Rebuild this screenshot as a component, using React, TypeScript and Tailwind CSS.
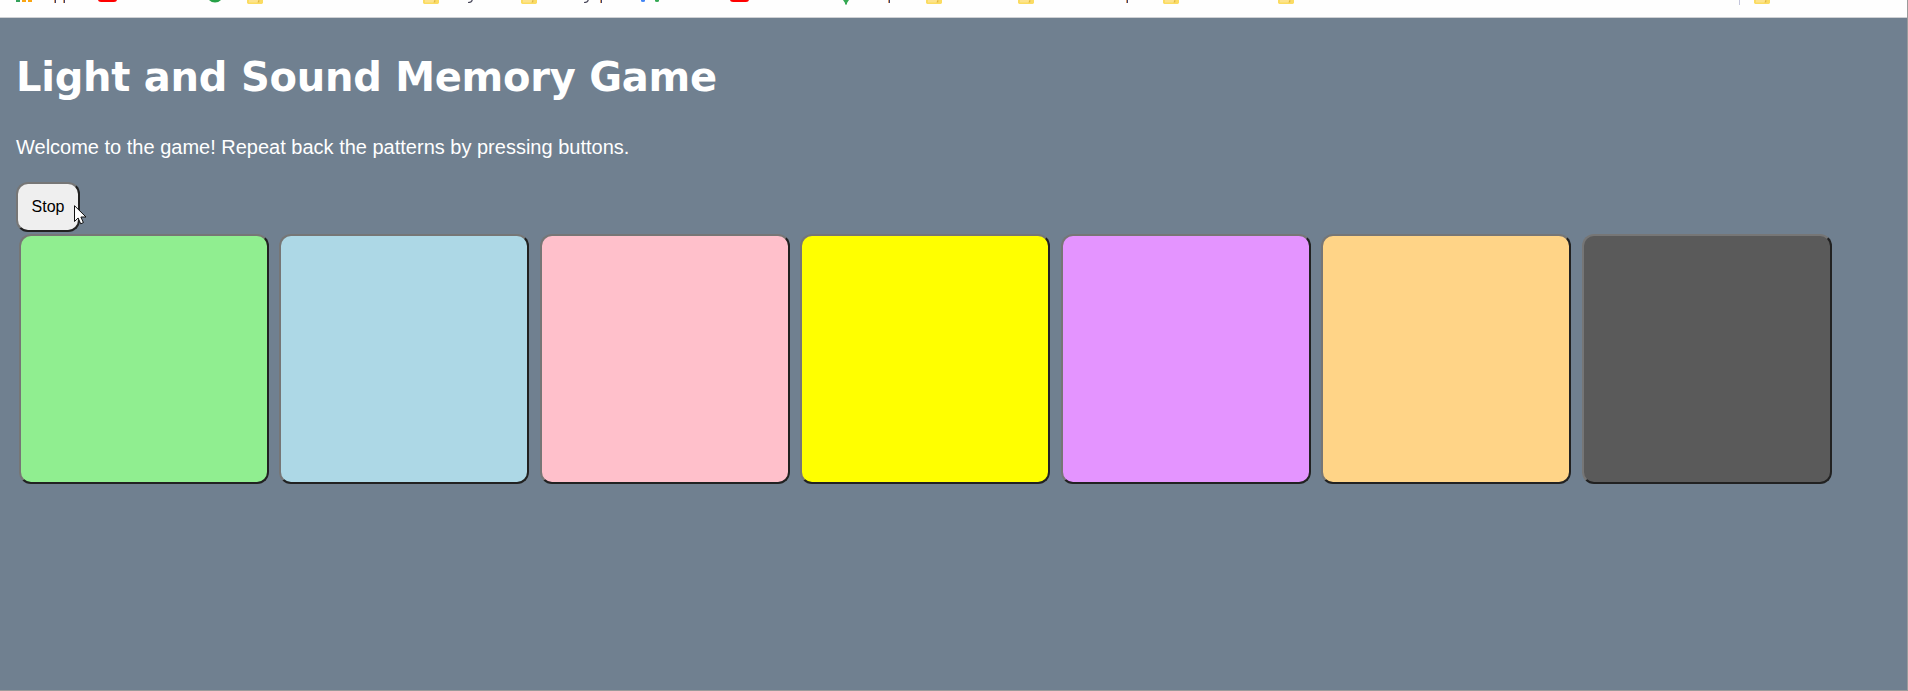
import type { ReactNode } from "react";

function Folder() {
  return (
    <>
      <path d="M0 0H16V2.6Q16 4 14.6 4H1.4Q0 4 0 2.6Z" fill="#fbdc62" />
      <rect x="2" y="0" width="11" height="2.5" fill="#fde38c" />
      <path d="M11.5 0H12.5V2.5H10.5Z" fill="#e3b93c" />
    </>
  );
}

function YouTube() {
  return <path d="M0 0H19Q18.7 2 16 2H3Q.3 2 0 0Z" fill="#ff0000" />;
}

function Stem({ x }: { x: number }) {
  return (
    <>
      <rect x={x - 1} width="1" height="3" fill="#d99a63" />
      <rect x={x} width="1" height="3" fill="#3c4272" />
    </>
  );
}

function Tail({ x }: { x: number }) {
  return <path d={`M${x + 4.3} 0Q${x + 3.5} 2.4 ${x} 2.5`} fill="none" stroke="#4b4a5c" strokeWidth="1.2" />;
}

function Bookmark({ className, children }: { className: string; children: ReactNode }) {
  return (
    <svg className={`h-[6px] shrink-0 overflow-visible ${className}`} aria-hidden="true">
      {children}
    </svg>
  );
}

function BookmarksBar() {
  return (
    <div className="flex h-[18px] items-start overflow-hidden border-b border-[#cfd1d4] bg-[#fefefe] pl-4">
      <Bookmark className="w-[82px]">
        <rect width="4" height="2" fill="#34a15a" />
        <rect x="6" width="4" height="2" fill="#f9a512" />
        <rect x="12" width="4" height="2" fill="#f9a512" />
        <Stem x={39} />
        <Stem x={48} />
      </Bookmark>
      <Bookmark className="w-[111px]"><YouTube /></Bookmark>
      <Bookmark className="w-[38px]"><path d="M0 0H12Q9.5 2.5 6 2.5T0 0Z" fill="#27a147" /></Bookmark>
      <Bookmark className="w-[176px]"><Folder /></Bookmark>
      <Bookmark className="w-[98px]"><Folder /><Tail x={45} /></Bookmark>
      <Bookmark className="w-[120px]"><Folder /><Tail x={63} /><Stem x={80} /></Bookmark>
      <Bookmark className="w-[89px]">
        <path d="M0 0H4V1Q4 2 2 2Q0 2 0 1Z" fill="#4285f4" />
        <path d="M14 0H18V1Q18 2 16 2Q14 2 14 1Z" fill="#34a853" />
      </Bookmark>
      <Bookmark className="w-[113px]"><YouTube /></Bookmark>
      <Bookmark className="w-[83px]"><path d="M0 0H6L4 3V4.5H2V3Z" fill="#34a853" /><Stem x={46} /></Bookmark>
      <Bookmark className="w-[92px]"><Folder /></Bookmark>
      <Bookmark className="w-[145px]"><Folder /><Stem x={109} /></Bookmark>
      <Bookmark className="w-[115px]"><Folder /></Bookmark>
      <Bookmark className="w-[461px]"><Folder /></Bookmark>
      <Bookmark className="w-[15px]"><rect width="1" height="5" fill="#c3c5dc" /></Bookmark>
      <Bookmark className="w-4"><Folder /></Bookmark>
    </div>
  );
}

const bevel = "border-2 border-t-[#767676] border-l-[#767676] border-r-[#212121] border-b-[#212121]";

const pads = [
  { name: "green", color: "bg-[#90ee90]" },
  { name: "blue", color: "bg-[#add8e6]" },
  { name: "pink", color: "bg-[#ffc0cb]" },
  { name: "yellow", color: "bg-[#ffff00]" },
  { name: "purple", color: "bg-[#e494ff]" },
  { name: "orange", color: "bg-[#ffd487]" },
  { name: "gray", color: "bg-[#5a5a5a]" },
];

export default function App() {
  return (
    <div className="flex h-[691px] w-[1908px] flex-col overflow-hidden border-r border-b border-[#9b9b9b] bg-[#708090] text-white">
      <BookmarksBar />
      <main className="flex flex-col items-start pl-4 font-['Liberation_Sans',Arial,sans-serif]">
        <h1 className="mt-[35px] font-['DejaVu_Sans',Verdana,sans-serif] text-[40px] leading-[48px] font-bold tracking-[-0.25px] whitespace-nowrap">
          Light and Sound Memory Game
        </h1>
        <p className="mt-[34px] text-[20px] leading-6">
          Welcome to the game! Repeat back the patterns by pressing buttons.
        </p>
        <div className="relative mt-[23px]">
          <button className={`block h-[50px] w-16 rounded-[12px] bg-[#efefef] pb-px text-base leading-5 text-black ${bevel}`}>
            Stop
          </button>
          <svg className="absolute top-[23px] left-[58px] h-[20px] w-[13px]" viewBox="0 0 13 20" aria-hidden="true">
            <path d="M.5 .7V16.5L4.1 13 6.7 18.8 9.4 17.6 6.9 12H12Z" fill="#fff" stroke="#111" strokeWidth="1" />
          </svg>
        </div>
        <div className="mt-[2px] ml-[3px] flex gap-[10.44px]">
          {pads.map((pad) => (
            <button key={pad.name} aria-label={pad.name} className={`size-[250px] shrink-0 rounded-[12px] ${pad.color} ${bevel}`} />
          ))}
        </div>
      </main>
    </div>
  );
}
